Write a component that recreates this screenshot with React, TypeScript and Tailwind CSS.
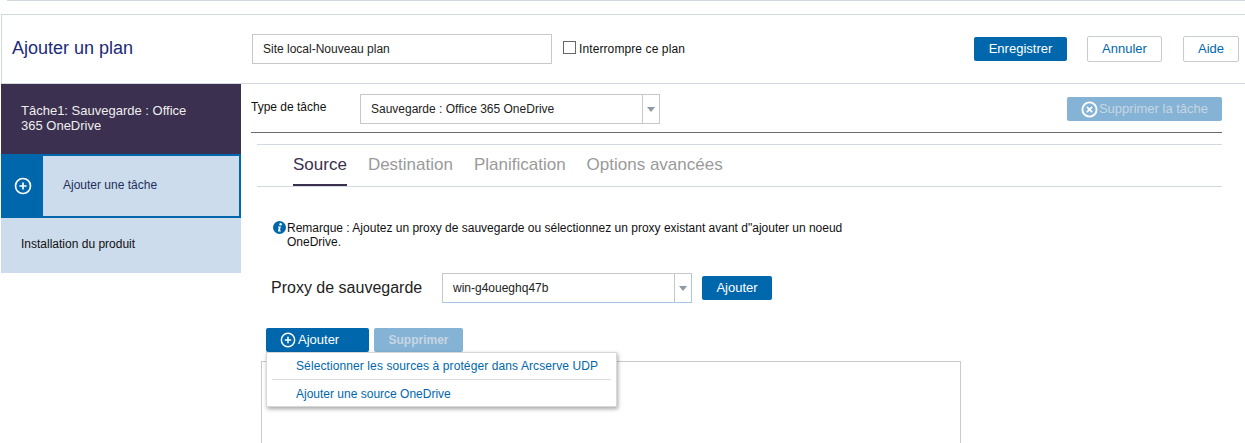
import { CirclePlus, CircleX } from "lucide-react";

const BLUE = "bg-[#0067ac]";

function Arrow() {
	return (
		<span className="flex h-full w-[17px] shrink-0 items-center justify-center border-l border-[#c8c8c8]">
			<span className="h-0 w-0 border-x-[4px] border-t-[5px] border-x-transparent border-t-[#8c98a4]" />
		</span>
	);
}

function InfoIcon() {
	return (
		<svg aria-hidden="true" viewBox="0 0 13 13" className="mr-px h-[13px] w-[13px] shrink-0">
			<circle cx="6.5" cy="6.5" r="6.5" fill="#0067ac" />
			<circle cx="7.6" cy="3.2" r="1.2" fill="#ffffff" />
			<path d="M5.2 5.6h2.6L6.9 9.6h1v1H4.9l.9-4h-.8z" fill="#ffffff" />
		</svg>
	);
}

function Sidebar() {
	return (
		<aside className="ml-px w-[240px] shrink-0">
			<div className="h-[70px] bg-[#3b304f] pl-5 pt-[19px] text-[13px] leading-[15px] text-[#eeeeee]">
				Tâche1: Sauvegarde : Office
				<br />
				365 OneDrive
			</div>
			<div className="flex h-[64px] border-2 border-[#0067ac] bg-[#ccdcec]">
				<div className={`flex w-10 items-center justify-center ${BLUE}`}>
					<CirclePlus className="h-[18px] w-[18px] text-white" strokeWidth={2.2} />
				</div>
				<div className="pl-5 pt-[21px] text-xs leading-4 text-[#1f2f5c]">Ajouter une tâche</div>
			</div>
			<div className="h-[55px] bg-[#ccdcec] pl-5 pt-[18px] text-xs leading-4 text-[#111111]">
				Installation du produit
			</div>
		</aside>
	);
}

function Tabs() {
	return (
		<div className="ml-[6px] flex h-[43px] gap-[21px] border-y border-[#d3d9e1] pl-[36px] text-[17px] leading-[39px] text-[#9a9a9a]">
			<div className="h-[41px] border-b-2 border-[#3b304f] text-[#3b304f]">Source</div>
			<div>Destination</div>
			<div>Planification</div>
			<div>Options avancées</div>
		</div>
	);
}

export default function App() {
	return (
		<div className="relative h-[443px] w-[1245px] overflow-hidden bg-white font-['Liberation_Sans',Arial,sans-serif]">
			<div className="ml-[7px] h-px bg-[#d3d9e1]" />

			{/* Header */}
			<header className="ml-px mt-[13px] flex h-[70px] items-center border-y border-l border-[#d3d9e1] text-xs">
				<h1 className="mb-[2px] w-[240px] pl-[10px] text-lg font-normal leading-5 text-[#1c2a78]">Ajouter un plan</h1>
				<div className="ml-[10px] flex h-[30px] w-[300px] items-center border border-[#c8c8c8] pl-[10px] text-[#222222]">
					Site local-Nouveau plan
				</div>
				<span className="mb-[3px] ml-[11px] h-[13px] w-[13px] border border-[#666666]" />
				<span className="ml-[3px] tracking-[0.1px] text-[#111111]">Interrompre ce plan</span>
				<button className={`ml-auto h-6 w-[93px] rounded-[2px] text-[13px] text-white ${BLUE}`}>Enregistrer</button>
				<button className="ml-5 h-[26px] w-[75px] rounded-[2px] border border-[#c8ccd0] text-[13px] text-[#0067ac]">
					Annuler
				</button>
				<button className="ml-[21px] mr-[6px] h-[26px] w-[56px] rounded-[2px] border border-[#c8ccd0] text-[13px] text-[#0067ac]">
					Aide
				</button>
			</header>

			<div className="flex">
				<Sidebar />

				<main className="ml-[10px] w-[971px]">
					{/* Task type */}
					<div className="flex h-[49px] border-b-[1px] border-[#6b6b6b] pt-[10px] text-xs">
						<div className="w-[109px] pt-[5px] leading-4 text-[#111111]">Type de tâche</div>
						<div className="flex h-[30px] w-[300px] items-center border border-[#c8c8c8] pl-[10px] text-[#222222]">
							<span className="flex-1">Sauvegarde : Office 365 OneDrive</span>
							<Arrow />
						</div>
						<button className="ml-auto mt-[3px] flex h-6 w-[155px] items-center justify-center gap-px rounded-[2px] bg-[#84b3d6] text-[13px] text-[#c8d6e2]">
							<CircleX className="h-[17px] w-[17px] text-white" strokeWidth={2.6} />
							Supprimer la tâche
						</button>
					</div>

					<div className="mt-[11px]">
						<Tabs />
					</div>

					{/* Note */}
					<div className="ml-[22px] mt-[34px] flex w-[580px] text-xs leading-[14px] text-[#111111]">
						<InfoIcon />
						<p>
							Remarque : Ajoutez un proxy de sauvegarde ou sélectionnez un proxy existant avant d"ajouter un noeud
							OneDrive.
						</p>
					</div>

					{/* Proxy */}
					<div className="ml-5 mt-6 flex h-[30px] items-center">
						<label className="w-[171px] text-base text-[#222222]">Proxy de sauvegarde</label>
						<div className="flex h-[30px] w-[250px] items-center border border-[#c8c8c8] border-b-[#a9c6e4] border-r-[#a9c6e4] pl-[10px] text-xs text-[#222222]">
							<span className="flex-1">win-g4oueghq47b</span>
							<Arrow />
						</div>
						<button className={`ml-[10px] h-6 w-[70px] rounded-[2px] text-[13px] text-white ${BLUE}`}>Ajouter</button>
					</div>

					{/* Source toolbar */}
					<div className="ml-[15px] mt-[25px] flex gap-[5px] text-xs">
						<button className={`flex h-6 w-[103px] items-center gap-[2px] rounded-[2px] pl-[14px] text-[13px] text-white ${BLUE}`}>
							<CirclePlus className="h-4 w-4" strokeWidth={2.2} />
							Ajouter
						</button>
						<button className="h-6 w-[89px] rounded-[2px] bg-[#84b3d6] font-bold text-[#c8d6e2]">Supprimer</button>
					</div>

					{/* Source list */}
					<div className="ml-[10px] mt-[9px] h-[100px] w-[700px] border border-[#c8ccd0]" />
				</main>
			</div>

			{/* Dropdown menu */}
			<div className="absolute left-[266px] top-[352px] h-[55px] w-[351px] border border-[#d8d8d8] bg-white px-[5px] text-xs text-[#0067ac] shadow-[1px_2px_4px_rgba(0,0,0,0.35)]">
				<div className="h-[27px] border-b border-[#dddddd] pl-6 pt-[6px] leading-[14px] tracking-[0.1px]">
					Sélectionner les sources à protéger dans Arcserve UDP
				</div>
				<div className="pl-6 pt-[7px] leading-[14px]">Ajouter une source OneDrive</div>
			</div>
		</div>
	);
}
